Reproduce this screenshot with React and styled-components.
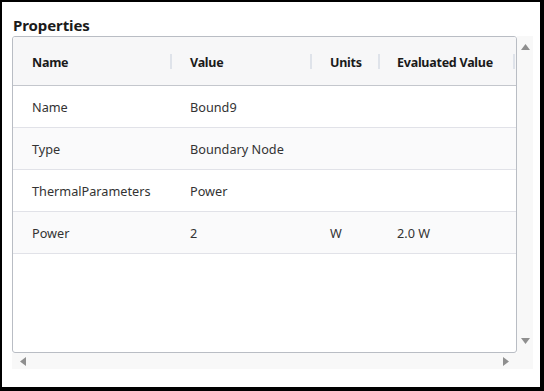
import React from "react";
import styled, { createGlobalStyle } from "styled-components";

const GlobalStyle = createGlobalStyle`
  * { box-sizing: border-box; }
  html, body { margin: 0; padding: 0; background: #fff; }
  body {
    font-family: "Noto Sans", "Open Sans", Arial, sans-serif;
    color: #333;
  }
`;

const columns = [
  { key: "name", label: "Name", pad: 19 },
  { key: "value", label: "Value", pad: 18 },
  { key: "units", label: "Units", pad: 18 },
  { key: "evaluated", label: "Evaluated Value", pad: 17 },
];

const rows = [
  { name: "Name", value: "Bound9", units: "", evaluated: "" },
  { name: "Type", value: "Boundary Node", units: "", evaluated: "" },
  { name: "ThermalParameters", value: "Power", units: "", evaluated: "" },
  { name: "Power", value: "2", units: "W", evaluated: "2.0 W" },
];

function Arrow({ dir }) {
  const pts = {
    up: "0,7 4.5,1 9,7",
    down: "0,1 4.5,7 9,1",
    left: "7,0 1,4.5 7,9",
    right: "1,0 7,4.5 1,9",
  };
  const vertical = dir === "up" || dir === "down";
  return (
    <svg width={vertical ? 9 : 8} height={vertical ? 8 : 9} viewBox={vertical ? "0 0 9 8" : "0 0 8 9"}>
      <polygon points={pts[dir]} fill="#8f8f8f" />
    </svg>
  );
}

export default function App() {
  return (
    <>
      <GlobalStyle />
      <Frame>
        <Title>Properties</Title>
        <TableArea>
          <TableBox>
            <HeaderRow>
              {columns.map((c) => (
                <HeadCell key={c.key} $pad={c.pad}>
                  {c.label}
                </HeadCell>
              ))}
            </HeaderRow>
            {rows.map((r, i) => (
              <BodyRow key={i} $striped={i % 2 === 1}>
                {columns.map((c) => (
                  <Cell key={c.key} $pad={c.pad}>
                    {r[c.key]}
                  </Cell>
                ))}
              </BodyRow>
            ))}
          </TableBox>
          <VScroll>
            <Arrow dir="up" />
            <Arrow dir="down" />
          </VScroll>
          <HScroll>
            <Arrow dir="left" />
            <Arrow dir="right" />
          </HScroll>
          <Corner />
        </TableArea>
      </Frame>
    </>
  );
}

const Frame = styled.div`
  width: 544px;
  height: 391px;
  border-style: solid;
  border-color: #000;
  border-width: 2px 4px 4px 2px;
  padding: 14px 0 0 10px;
  background: #fff;
`;

const Title = styled.div`
  font-size: 15px;
  font-weight: 700;
  line-height: 18px;
  margin-bottom: 2px;
  color: #1b1b1b;
  padding-left: 1px;
  letter-spacing: -0.1px;
`;

const TableArea = styled.div`
  display: grid;
  grid-template-columns: 505px 16px;
  grid-template-rows: 317px 16px;
`;

const TableBox = styled.div`
  border: 1px solid #b9bdc4;
  border-radius: 3px;
  overflow: hidden;
  background: #fff;
`;

const HeaderRow = styled.div`
  display: grid;
  grid-template-columns: 159px 140px 68px 135px;
  height: 49px;
  background: #f7f7f8;
  border-bottom: 1px solid #c4c7cd;
`;

const HeadCell = styled.div`
  position: relative;
  display: flex;
  align-items: center;
  padding-left: ${(p) => p.$pad}px;
  padding-top: 2px;
  font-size: 12.5px;
  font-weight: 700;
  letter-spacing: -0.25px;
  color: #1a1a1a;

  &::after {
    content: "";
    position: absolute;
    right: 0;
    top: 17px;
    width: 2px;
    height: 15px;
    background: #dfe3ea;
  }
`;

const BodyRow = styled.div`
  display: grid;
  grid-template-columns: 159px 140px 68px 135px;
  height: 42px;
  background: ${(p) => (p.$striped ? "#fafafb" : "#fff")};
  border-bottom: 1px solid #e1e2e8;
`;

const Cell = styled.div`
  display: flex;
  align-items: center;
  padding-left: ${(p) => p.$pad}px;
  font-size: 12.7px;
  color: #333;
  white-space: nowrap;
`;

const VScroll = styled.div`
  background: #f8f8f8;
  display: flex;
  flex-direction: column;
  align-items: center;
  justify-content: space-between;
  padding: 7px 0 8px 0;
`;

const HScroll = styled.div`
  background: #f8f8f8;
  display: flex;
  align-items: center;
  justify-content: space-between;
  padding: 0 7px 0 7px;
`;

const Corner = styled.div`
  background: #f8f8f8;
`;
